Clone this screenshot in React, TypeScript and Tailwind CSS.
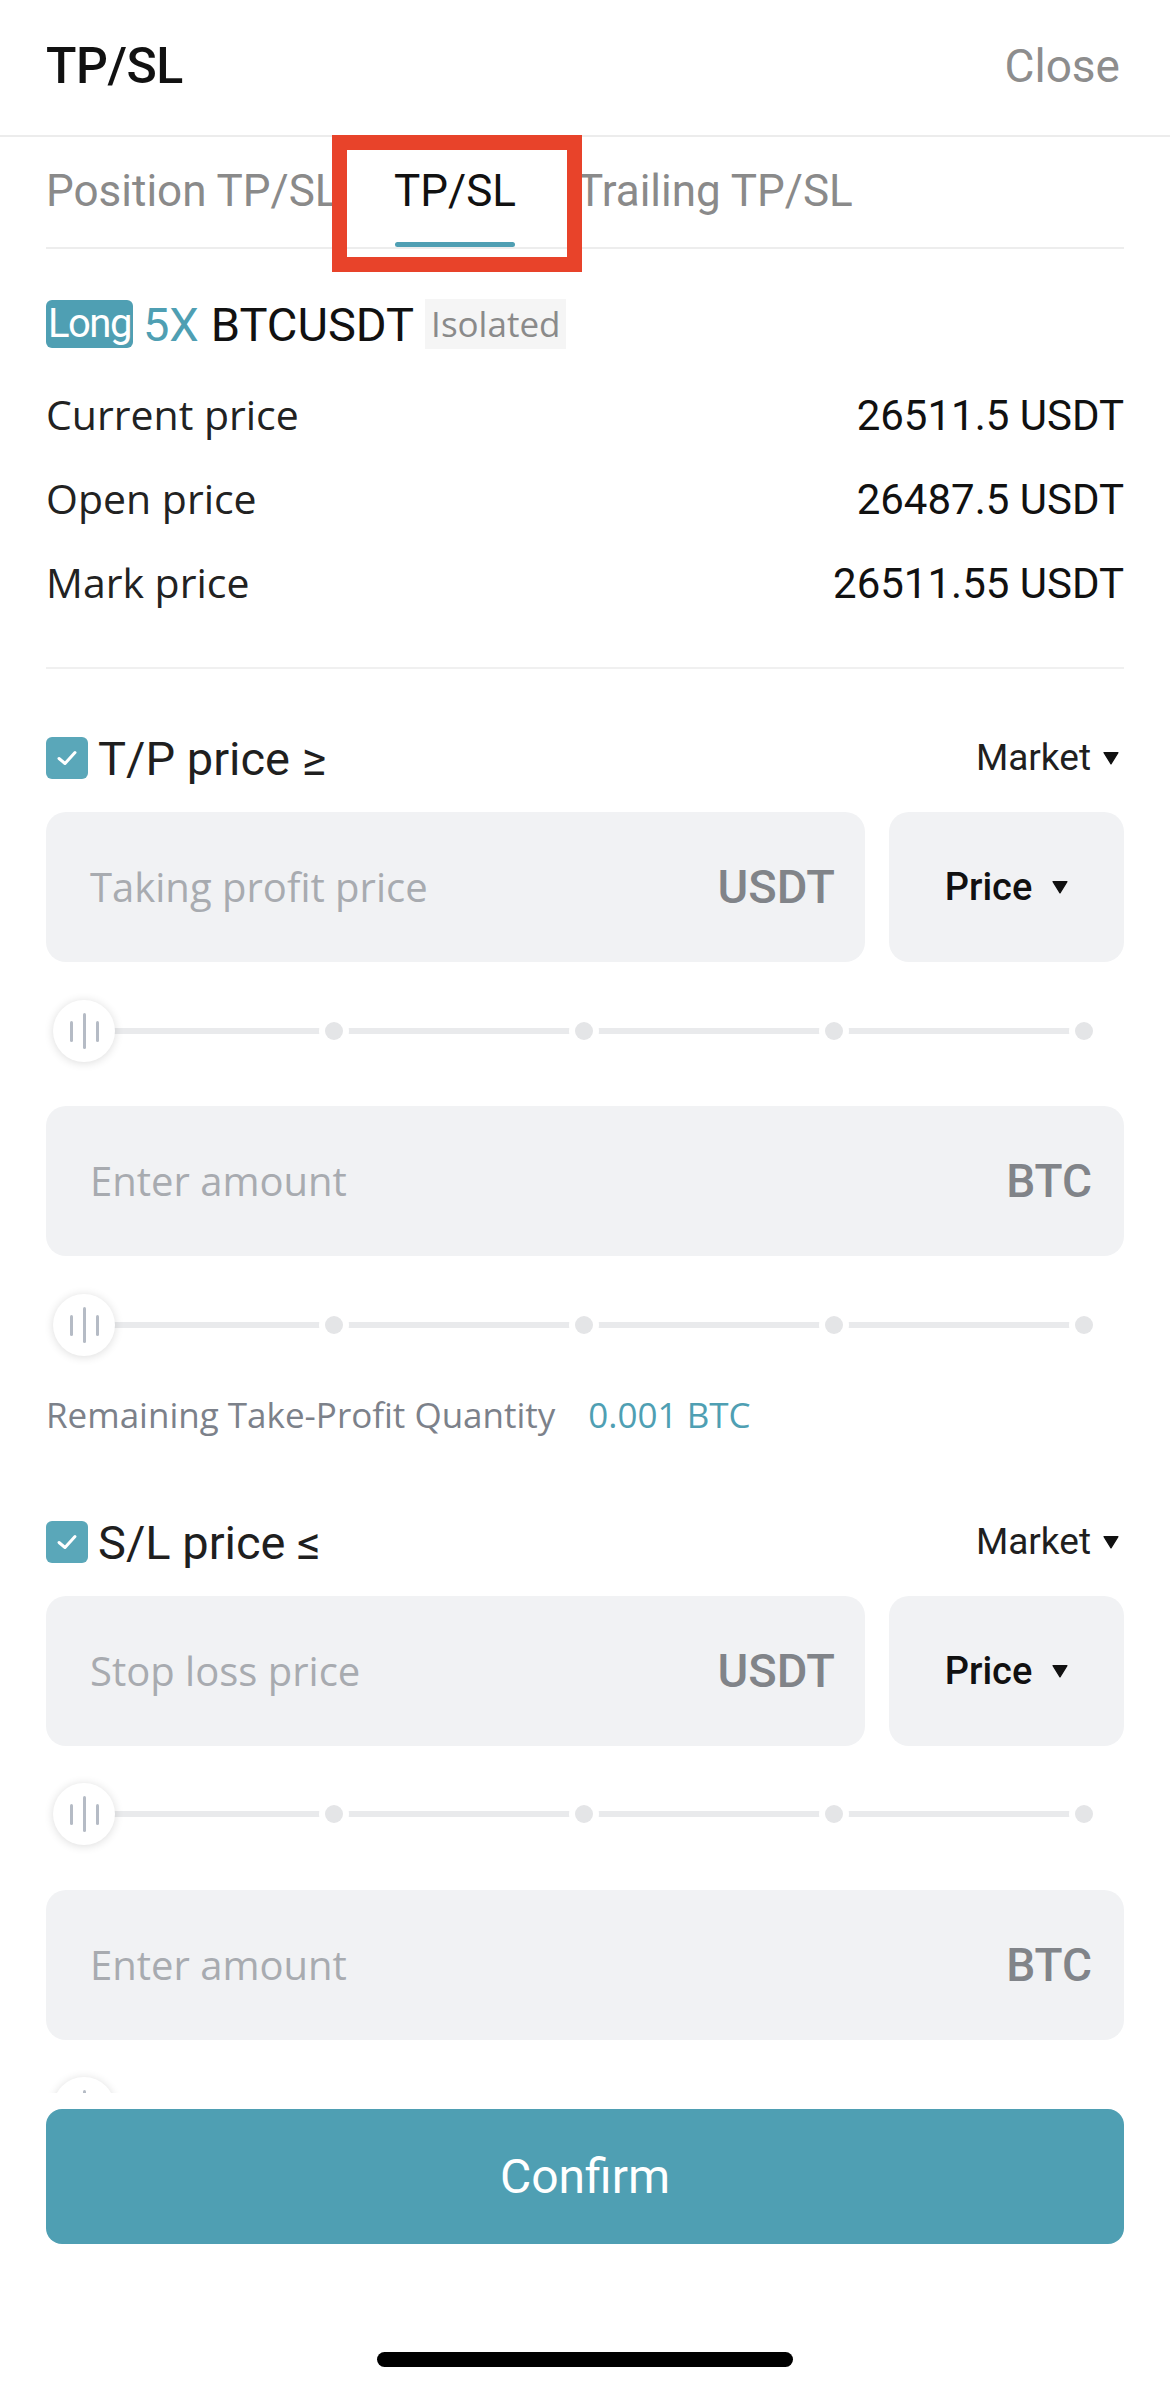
import React from "react";

function Caret({ w = 15, h = 13 }: { w?: number; h?: number }) {
  return (
    <svg width={w} height={h} viewBox="0 0 15 13" className="shrink-0">
      <path d="M1 1.5 H14 L7.5 12 Z" fill="#111" stroke="#111" strokeWidth="1.2" strokeLinejoin="round" />
    </svg>
  );
}

function Check() {
  return (
    <div className="w-[42px] h-[42px] rounded-[6px] bg-[#5aa7b9] flex items-center justify-center shrink-0">
      <svg width="24" height="18" viewBox="0 0 24 18">
        <path d="M4 9.5 L10 14.5 L20 3.5" fill="none" stroke="#fff" strokeWidth="3" strokeLinecap="round" strokeLinejoin="round" />
      </svg>
    </div>
  );
}

function Dot({ cls }: { cls: string }) {
  return (
    <div className={`absolute top-[16px] w-[30px] h-[30px] rounded-full bg-white flex items-center justify-center ${cls}`}>
      <div className="w-[18px] h-[18px] rounded-full bg-[#e4e5e7]" />
    </div>
  );
}

function Slider() {
  return (
    <div className="relative h-[62px] shrink-0">
      <div className="absolute left-[38px] right-[40px] top-[28px] h-[6px] bg-[#e9eaec]" />
      <Dot cls="left-[273px]" />
      <Dot cls="left-[523px]" />
      <Dot cls="left-[773px]" />
      <Dot cls="left-[1023px]" />
      <div className="absolute left-[7px] top-0 w-[62px] h-[62px] rounded-full bg-white shadow-[0_1px_10px_rgba(0,0,0,0.14)] flex items-center justify-center gap-[10px]">
        <div className="w-[3px] h-[21px] rounded-full bg-[#b5bbc5]" />
        <div className="w-[3px] h-[36px] rounded-full bg-[#b5bbc5]" />
        <div className="w-[3px] h-[21px] rounded-full bg-[#b5bbc5]" />
      </div>
    </div>
  );
}

const OPEN = "font-['Open_Sans','Noto_Sans',sans-serif]";

function PriceInput({ placeholder }: { placeholder: string }) {
  return (
    <div className="flex gap-[24px] h-[150px] shrink-0">
      <div className="flex-1 rounded-[20px] bg-[#f1f2f4] flex items-center justify-between pl-[44px] pr-[30px]">
        <span className={`${OPEN} text-[40px] text-[#a8abb0]`}>{placeholder}</span>
        <span className="text-[47px] font-medium text-[#818489]">USDT</span>
      </div>
      <div className="w-[235px] rounded-[20px] bg-[#f1f2f4] flex items-center justify-center gap-[20px]">
        <span className="text-[38px] font-medium text-[#111]">Price</span>
        <Caret w={16} h={14} />
      </div>
    </div>
  );
}

function AmountInput() {
  return (
    <div className="h-[150px] rounded-[20px] bg-[#f1f2f4] flex items-center justify-between pl-[44px] pr-[32px] shrink-0">
      <span className={`${OPEN} text-[40px] text-[#a8abb0]`}>Enter amount</span>
      <span className="text-[46px] font-medium text-[#818489]">BTC</span>
    </div>
  );
}

function SectionHeader({ label }: { label: string }) {
  return (
    <div className="h-[42px] flex items-center justify-between shrink-0">
      <div className="flex items-center gap-[10px]">
        <Check />
        <span className="text-[47px] text-[#1f1f1f] leading-none">{label}</span>
      </div>
      <div className="flex items-center gap-[12px] pr-[5px]">
        <span className="text-[37px] text-[#1f1f1f]">Market</span>
        <Caret w={16} h={14} />
      </div>
    </div>
  );
}

export default function App() {
  const rows = [
    ["Current price", "26511.5 USDT"],
    ["Open price", "26487.5 USDT"],
    ["Mark price", "26511.55 USDT"],
  ];
  return (
    <div className="w-[1170px] h-[2391px] bg-white relative overflow-hidden flex flex-col font-['Roboto','Liberation_Sans',sans-serif]">
      {/* Header */}
      <header className="h-[137px] shrink-0 flex items-center justify-between px-[46px] pb-[2px] border-b-2 border-[#ececec]">
        <h1 className="text-[50px] font-medium text-[#111] tracking-[-0.5px]">TP/SL</h1>
        <span className="text-[46px] text-[#8d8d8d] pr-[4px]">Close</span>
      </header>

      {/* Scroll content */}
      <main className="flex-1 overflow-hidden px-[46px] flex flex-col">
        {/* Tabs */}
        <div className="h-[112px] shrink-0 flex border-b-2 border-[#ededed]">
          <div className="w-[349px] pt-[28px]">
            <span className="text-[44px] leading-[52px] text-[#8a8a8a] whitespace-nowrap">Position TP/SL</span>
          </div>
          <div className="w-[120px] flex flex-col items-center pt-[28px]">
            <span className="text-[44px] leading-[52px] text-[#111] whitespace-nowrap">TP/SL</span>
            <div className="mt-auto h-[5px] w-full rounded-full bg-[#4f9fb3]" />
          </div>
          <div className="ml-[62px] pt-[28px]">
            <span className="text-[44px] leading-[52px] text-[#8a8a8a] whitespace-nowrap">Trailing TP/SL</span>
          </div>
        </div>

        {/* Symbol row */}
        <div className="mt-[50px] h-[50px] shrink-0 flex items-center">
          <span className="h-[48px] px-[2px] rounded-[6px] bg-[#4f9fb3] text-white text-[40px] tracking-[-1.5px] leading-[48px]">Long</span>
          <span className="ml-[10px] text-[47px] text-[#4f9fb3] leading-none">5X</span>
          <span className="ml-[12px] text-[47px] text-[#111] leading-none">BTCUSDT</span>
          <span className={`ml-[11px] h-[50px] px-[6px] bg-[#f5f5f5] text-[35px] text-[#8a8a8a] leading-[50px] ${OPEN}`}>Isolated</span>
        </div>

        {/* Price rows */}
        <div className="mt-[24px] flex flex-col shrink-0">
          {rows.map(([l, v]) => (
            <div key={l} className="h-[84px] flex items-center justify-between">
              <span className={`${OPEN} text-[41px] text-[#222]`}>{l}</span>
              <span className="text-[42px] text-[#111]">{v}</span>
            </div>
          ))}
        </div>

        <div className="mt-[42px] h-[2px] bg-[#f0f0f0] shrink-0" />

        {/* T/P */}
        <div className="mt-[68px]">
          <SectionHeader label="T/P price ≥" />
        </div>
        <div className="mt-[33px]">
          <PriceInput placeholder="Taking profit price" />
        </div>
        <div className="mt-[38px]">
          <Slider />
        </div>
        <div className="mt-[44px]">
          <AmountInput />
        </div>
        <div className="mt-[38px]">
          <Slider />
        </div>
        <div className={`mt-[39px] h-[40px] flex items-center shrink-0 ${OPEN}`}>
          <span className="text-[35px] text-[#7c818a]">Remaining Take-Profit Quantity</span>
          <span className="ml-[33px] text-[35px] text-[#4f9fb3]">0.001 BTC</span>
        </div>

        {/* S/L */}
        <div className="mt-[86px]">
          <SectionHeader label="S/L price ≤" />
        </div>
        <div className="mt-[33px]">
          <PriceInput placeholder="Stop loss price" />
        </div>
        <div className="mt-[37px]">
          <Slider />
        </div>
        <div className="mt-[45px]">
          <AmountInput />
        </div>
        <div className="mt-[37px]">
          <Slider />
        </div>
      </main>

      {/* Bottom panel */}
      <footer className="h-[298px] shrink-0 bg-white px-[46px] pt-[16px] flex flex-col">
        <button className="h-[135px] w-full rounded-[16px] bg-[#4f9fb3] text-white text-[48px]">Confirm</button>
        <div className="mt-[108px] mx-auto w-[416px] h-[15px] rounded-full bg-black" />
      </footer>

      {/* Annotation box */}
      <div className="absolute left-[332px] top-[135px] w-[250px] h-[137px] border-[15px] border-[#e8432a]" />
    </div>
  );
}
